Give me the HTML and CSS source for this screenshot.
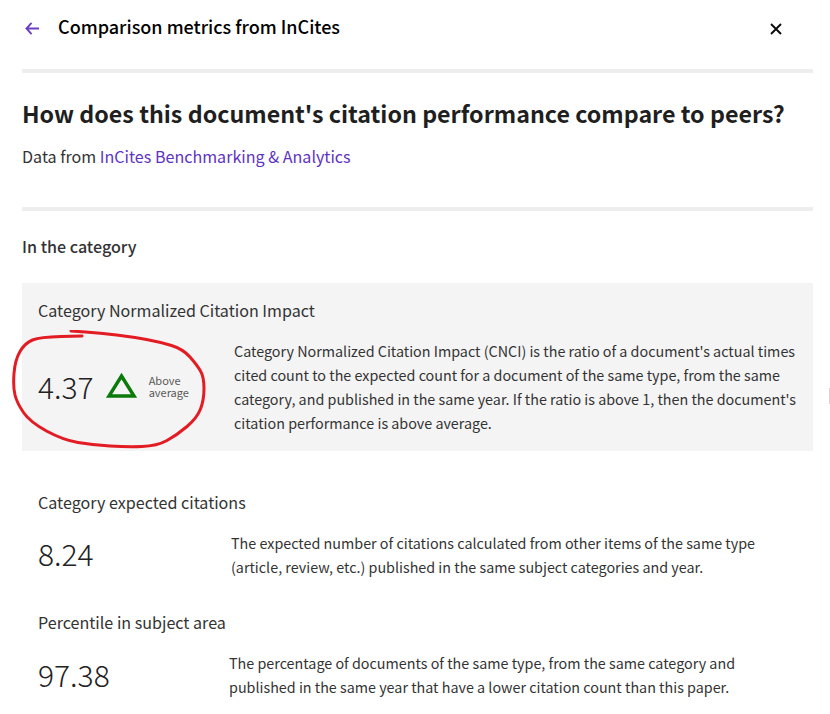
FILE: index.html
```html
<!DOCTYPE html>
<html lang="en">
<head>
    <meta charset="UTF-8">
    <title>Comparison metrics from InCites</title>
    <link rel="stylesheet" href="styles.css">
</head>
<body>
    <div class="page">
        <header class="top-bar">
            <svg class="back-icon" width="15" height="13" viewBox="0 0 16 14" aria-hidden="true">
                <path d="M7 1 L1.5 7 L7 13 M1.5 7 H15" fill="none" stroke="#6a3fc4" stroke-width="2"/>
            </svg>
            <h2 class="top-title">Comparison metrics from InCites</h2>
            <svg class="close-icon" width="12" height="12" viewBox="0 0 12 12" aria-hidden="true">
                <path d="M1 1 L11 11 M11 1 L1 11" fill="none" stroke="#0b0b0b" stroke-width="1.9"/>
            </svg>
        </header>

        <section class="intro">
            <h1>How does this document's citation performance compare to peers?</h1>
            <p>Data from <a href="#">InCites Benchmarking &amp; Analytics</a></p>
        </section>

        <h3 class="section-title">In the category</h3>

        <div class="metric metric-highlight">
            <h4>Category Normalized Citation Impact</h4>
            <div class="metric-body cnci">
                <div class="metric-value">
                    <span class="number">4.37</span>
                    <svg class="trend" width="32" height="26" viewBox="0 0 32 26" aria-hidden="true">
                        <path d="M16.5 4 L29 24 H4 Z" fill="none" stroke="#0a7a0a" stroke-width="3.4"/>
                    </svg>
                    <span class="trend-label">Above<br>average</span>
                </div>
                <p>Category Normalized Citation Impact (CNCI) is the ratio of a document's actual times cited count to the expected count for a document of the same type, from the same category, and published in the same year. If the ratio is above 1, then the document's citation performance is above average.</p>
            </div>
        </div>

        <div class="metric">
            <h4>Category expected citations</h4>
            <div class="metric-body expected">
                <span class="number">8.24</span>
                <p>The expected number of citations calculated from other items of the same type (article, review, etc.) published in the same subject categories and year.</p>
            </div>
        </div>

        <div class="metric">
            <h4>Percentile in subject area</h4>
            <div class="metric-body percentile">
                <span class="number">97.38</span>
                <p>The percentage of documents of the same type, from the same category and published in the same year that have a lower citation count than this paper.</p>
            </div>
        </div>

        <!-- hand drawn annotation on top of the screenshot -->
        <svg class="scribble" width="210" height="125" viewBox="0 0 210 125" aria-hidden="true">
            <path d="M71 1 L85.5 2 Q100 3 116.5 5 Q133 7 146.5 9.5 Q160 12 171.5 15.5 Q183 19 190 27 Q197 35 200.5 41 Q204 47 204 58.5 Q204 70 200.5 79 Q197 88 187 96.5 Q177 105 167 110.5 Q157 116 142 116.5 Q127 117 110 116 Q93 115 78 112.5 Q63 110 46.5 101 Q30 92 23.5 82.5 Q17 73 15 65 Q13 57 14 43.5 Q15 30 20 21.5 Q25 13 32.5 10 Q40 7 61 6.5 L82 6" fill="none" stroke="#e31b23" stroke-width="3" stroke-linecap="round" stroke-linejoin="round"/>
        </svg>
        <div class="edge-mark"></div>
    </div>
</body>
</html>
```

FILE: styles.css
```css
html, body {
    margin: 0;
    height: 100%;
    overflow: hidden;
    background: #fff;
}

.page {
    position: relative;
    width: 830px;
    height: 714px;
    overflow: hidden;
    box-sizing: border-box;
    padding: 0 17px 0 22px;
    font-family: "Noto Sans CJK JP", "Source Sans Pro", "Noto Sans", sans-serif;
    color: #333;
}

h1, h2, h3, h4, p {
    margin: 0;
}

.top-bar {
    display: flex;
    align-items: center;
    height: 73px;
    padding-bottom: 17px;
    box-sizing: border-box;
    border-bottom: 4px solid #eeeeee;
}

.back-icon {
    margin: 5px 18px 0 3px;
}

.top-title {
    flex: 1;
    font-size: 18px;
    font-weight: 500;
    line-height: 28px;
    color: #000;
}

.close-icon {
    margin: 5px 31px 0 0;
}

.intro {
    height: 138px;
    padding-top: 22px;
    box-sizing: border-box;
    border-bottom: 4px solid #eeeeee;
}

.intro h1 {
    font-size: 23.25px;
    font-weight: 700;
    line-height: 36px;
    color: #1f1f1f;
}

.intro p {
    margin-top: 13px;
    font-size: 16.1px;
    line-height: 24px;
}

.intro a {
    color: #5e33bf;
    text-decoration: none;
}

.section-title {
    margin-top: 23px;
    font-size: 16.1px;
    font-weight: 500;
    line-height: 24px;
    color: #333;
}

.metric {
    padding: 0 16px;
}

.metric h4 {
    font-size: 16.1px;
    font-weight: 400;
    line-height: 24px;
    color: #333;
}

.metric-highlight {
    margin-top: 25px;
    height: 168px;
    margin-bottom: 39px;
    padding-top: 15px;
    box-sizing: border-box;
    background: #f4f4f4;
}

.metric-body {
    display: grid;
    align-items: center;
}

.metric-body p {
    font-size: 14.33px;
    line-height: 24px;
    color: #333;
}

.cnci {
    grid-template-columns: 196px 1fr;
    margin-top: 17px;
    margin-right: -2px;
}

.expected {
    grid-template-columns: 193px 1fr;
    margin-top: 17px;
    margin-bottom: 31px;
    padding-right: 20px;
}

.percentile {
    grid-template-columns: 191px 1fr;
    margin-top: 17px;
    padding-right: 20px;
}

.metric-value {
    display: flex;
    align-items: center;
}

.number {
    font-size: 30px;
    font-weight: 300;
    line-height: 40px;
    padding-bottom: 2px;
    color: #222;
}

.expected .number {
    padding-bottom: 4px;
}

.trend {
    margin: 0 12px 4px 11px;
}

.trend-label {
    font-size: 11px;
    line-height: 12px;
    color: #595959;
    padding-bottom: 2px;
}

.scribble {
    position: absolute;
    left: 0;
    top: 330px;
}

.edge-mark {
    position: absolute;
    left: 829px;
    top: 388px;
    width: 1px;
    height: 16px;
    background: #d8d8d8;
}
```
